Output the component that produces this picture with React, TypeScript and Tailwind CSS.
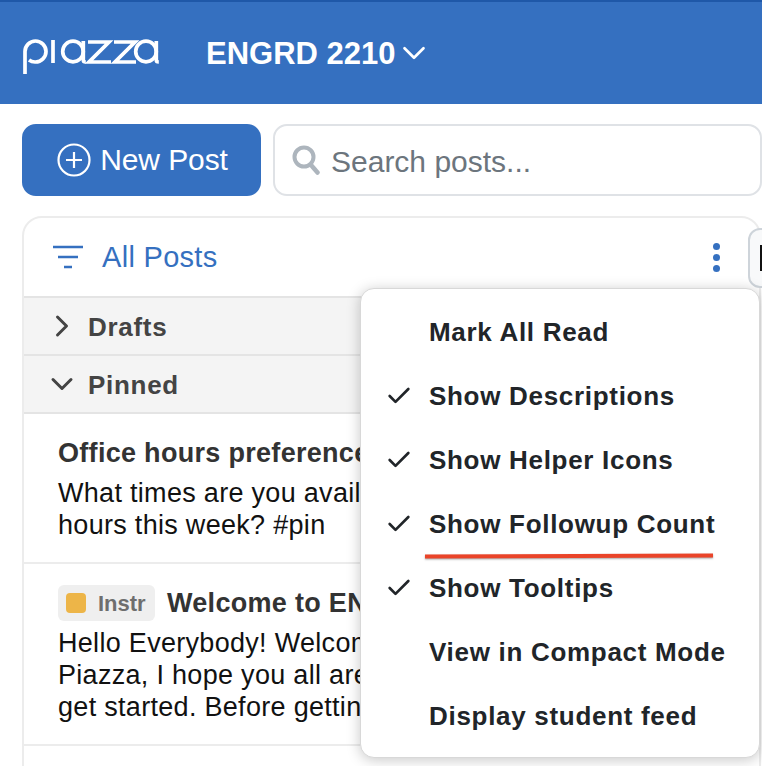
import React from 'react';
import { ChevronDown, ChevronRight, Check } from 'lucide-react';

const menuItems = [
  { label: 'Mark All Read', checked: false },
  { label: 'Show Descriptions', checked: true },
  { label: 'Show Helper Icons', checked: true },
  { label: 'Show Followup Count', checked: true, marked: true },
  { label: 'Show Tooltips', checked: true },
  { label: 'View in Compact Mode', checked: false },
  { label: 'Display student feed', checked: false },
];

function PiazzaLogo() {
  return (
    <svg width="136" height="36" viewBox="0 0 136 36" fill="none" stroke="#fff" strokeWidth="3.7">
      <path d="M2 35V12.5a10.5 10.5 0 1 1 10.5 10.5A10 10 0 0 1 6 21" />
      <path d="M30 1v23" />
      <circle cx="50" cy="12.5" r="10.3" />
      <path d="M60.3 2v19q0 2 2.5 2" />
      <path d="M65 3h21L66 23h22" />
      <path d="M91 3h21L92 23h21" />
      <circle cx="123" cy="12.5" r="10.3" />
      <path d="M133.3 2v19q0 2 2.5 2" />
    </svg>
  );
}

function SectionRow({ label, open }: { label: string; open?: boolean }) {
  return (
    <div className="h-[58px] flex items-center bg-[#f4f4f4] border-b-2 border-[#e4e4e4] text-[#444]">
      <div className="w-[38px] ml-[19px] flex justify-center">
        {open ? (
          <ChevronDown className="w-[36px] h-[36px]" strokeWidth={2} />
        ) : (
          <ChevronRight className="w-[36px] h-[36px]" strokeWidth={2} />
        )}
      </div>
      <span className="ml-[7px] mt-[3px] text-[26px] font-bold tracking-[0.7px]">{label}</span>
    </div>
  );
}

export default function App() {
  return (
    <div className="relative w-[762px] h-[766px] overflow-hidden bg-white font-['Liberation_Sans',Arial,sans-serif]">
      <header className="h-[104px] bg-[#3570c0] border-t-2 border-[#1f58a8] flex items-center pl-[23px]">
        <div className="mt-[8px]">
          <PiazzaLogo />
        </div>
        <div className="ml-[47px] flex items-center text-white">
          <span className="text-[31px] font-bold mt-[2px]">ENGRD 2210</span>
          <ChevronDown className="w-[38px] h-[38px] ml-[-1px]" strokeWidth={1.7} />
        </div>
      </header>

      <div className="flex gap-[12px] pl-[22px] mt-[20px] h-[72px]">
        <button className="w-[239px] shrink-0 rounded-[14px] bg-[#3570c0] text-white flex items-center justify-center gap-[9px] text-[30px] tracking-[-0.1px]">
          <svg className="ml-[2px]" width="34" height="34" viewBox="0 0 34 34" fill="none" stroke="#fff" strokeWidth="2.2">
            <circle cx="17" cy="17" r="15.5" />
            <path d="M17 9v16M9 17h16" />
          </svg>
          <span className="mb-[2px]">New Post</span>
        </button>
        <div className="w-[489px] shrink-0 rounded-[14px] border-2 border-[#dfe2e6] flex items-center pl-[17px] gap-[11px] text-[30px] text-[#6c757d]">
          <svg width="28" height="30" viewBox="0 0 28 30" fill="none">
            <circle cx="12" cy="12" r="9.5" stroke="#adb5bd" strokeWidth="4" />
            <path d="M19 20l6.5 7.5" stroke="#adb5bd" strokeWidth="4.5" strokeLinecap="round" />
          </svg>
          <span className="mt-[2px]">Search posts...</span>
        </div>
      </div>

      <div className="ml-[22px] mt-[20px] w-[739px] h-[600px] rounded-t-[20px] border-2 border-[#ececec]">
        <div className="h-[78px] flex items-center relative">
          <svg className="ml-[28px]" width="32" height="26" viewBox="0 0 32 26" fill="none" stroke="#3570c0" strokeWidth="2.6">
            <path d="M1 3h30M6 13h20M12 23h8" />
          </svg>
          <span className="ml-[18px] mt-[2px] text-[29px] tracking-[0.3px] text-[#3570c0]">All Posts</span>
          <div className="ml-auto mr-[39px] flex flex-col gap-[4px]">
            <span className="w-[7px] h-[7px] rounded-full bg-[#3570c0]" />
            <span className="w-[7px] h-[7px] rounded-full bg-[#3570c0]" />
            <span className="w-[7px] h-[7px] rounded-full bg-[#3570c0]" />
          </div>
        </div>
        <div className="border-t-2 border-[#e4e4e4]">
          <SectionRow label="Drafts" />
          <SectionRow label="Pinned" open />
        </div>
        <div className="h-[150px] pl-[34px] pt-[22px] border-b-2 border-[#ececec] overflow-hidden">
          <div className="text-[27px] font-bold text-[#333] leading-[34px] whitespace-nowrap tracking-[0.3px]">
            Office hours preferences
          </div>
          <p className="mt-[7px] text-[27px] tracking-[0.3px] leading-[32px] text-[#111] whitespace-nowrap">
            What times are you available for office
            <br />
            hours this week? #pin
          </p>
        </div>
        <div className="h-[182px] pl-[34px] pt-[20px] border-b-2 border-[#ececec] overflow-hidden">
          <div className="flex items-center whitespace-nowrap h-[38px]">
            <span className="w-[97px] h-[36px] rounded-[6px] bg-[#efefef] flex items-center pl-[8px] gap-[12px] shrink-0">
              <span className="w-[20px] h-[20px] rounded-[4px] bg-[#edb548]" />
              <span className="text-[22px] font-bold text-[#6e6e6e]">Instr</span>
            </span>
            <span className="ml-[12px] text-[27px] font-bold text-[#333] tracking-[0.3px]">Welcome to ENGRD 2210</span>
          </div>
          <p className="mt-[5px] text-[27px] tracking-[0.3px] leading-[32px] text-[#111] whitespace-nowrap">
            Hello Everybody! Welcome to
            <br />
            Piazza, I hope you all are ready to
            <br />
            get started. Before getting into
          </p>
        </div>
      </div>

      <div className="absolute left-[748px] top-[228px] w-[30px] h-[60px] rounded-[12px] border-2 border-[#ced4da] bg-[#f8f9fa] flex items-center">
        <span className="ml-[10px] w-[6px] h-[26px] bg-[#111]" />
      </div>

      <div className="absolute left-[360px] top-[288px] w-[400px] h-[470px] rounded-[14px] bg-white border border-[#d8d8d8] shadow-[0_2px_14px_rgba(0,0,0,0.22)] pt-[11px]">
        {menuItems.map((item) => (
          <div key={item.label} className="relative h-[64px] flex items-center text-[#212529] whitespace-nowrap">
            <div className="w-[68px] flex justify-end pr-[16px]">
              {item.checked && <Check className="w-[28px] h-[28px]" strokeWidth={2.3} />}
            </div>
            <span className="text-[26px] font-bold tracking-[0.7px]">{item.label}</span>
            {item.marked && (
              <span className="absolute left-[64px] top-[62px] w-[288px] h-[4px] bg-[#ea4429] shadow-[0_1px_2px_rgba(0,0,0,0.35)] -rotate-[0.2deg]" />
            )}
          </div>
        ))}
      </div>
    </div>
  );
}
